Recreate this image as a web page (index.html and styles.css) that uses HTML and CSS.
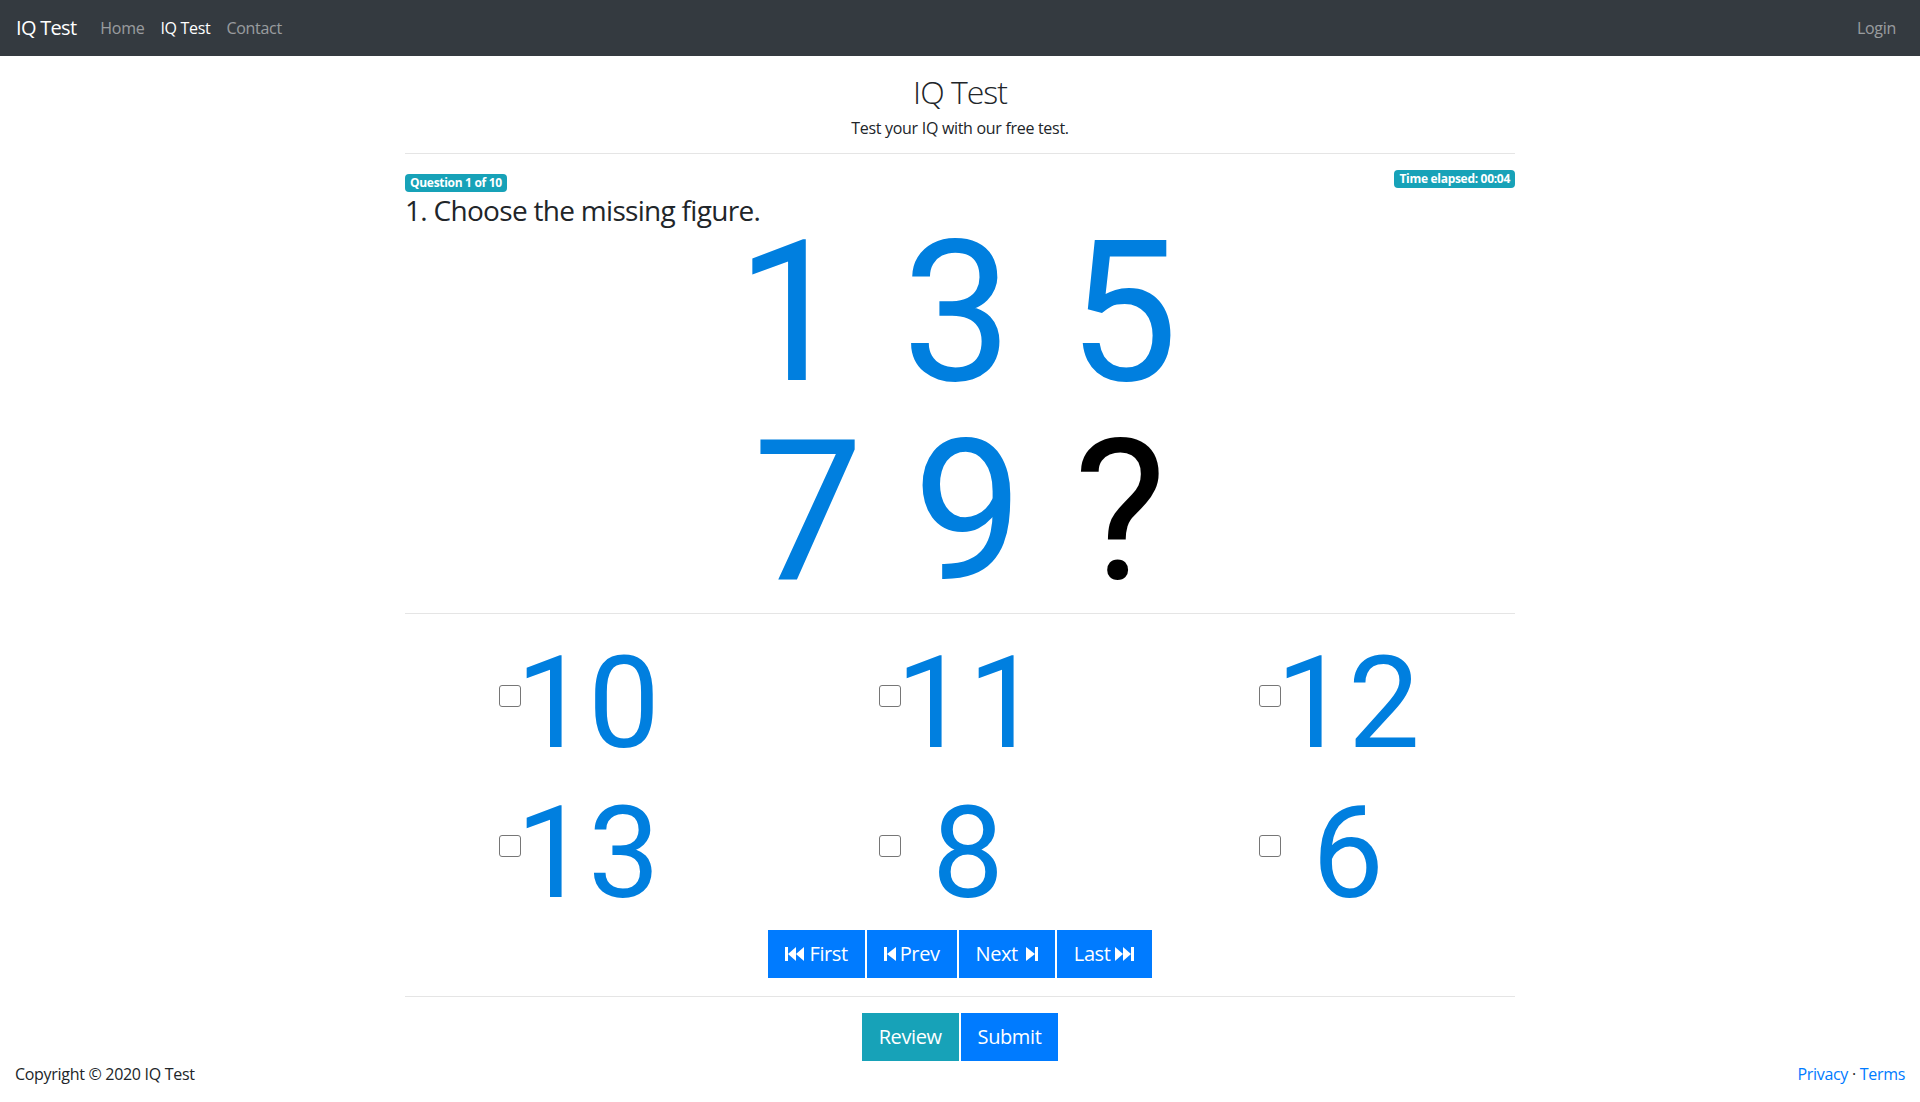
FILE: index.html
```html
<!DOCTYPE html>
<html lang="en">
<head>
<meta charset="utf-8">
<title>IQ Test</title>
<link rel="stylesheet" href="styles.css">
</head>
<body>
<nav class="navbar">
  <a class="brand" href="#">IQ Test</a>
  <ul class="nav-links">
    <li><a class="nav-link" href="#">Home</a></li>
    <li><a class="nav-link active" href="#">IQ Test</a></li>
    <li><a class="nav-link" href="#">Contact</a></li>
  </ul>
  <ul class="nav-links nav-right">
    <li><a class="nav-link" href="#">Login</a></li>
  </ul>
</nav>

<main class="container">
  <header class="intro">
    <h1 class="title">IQ Test</h1>
    <p class="subtitle">Test your IQ with our free test.</p>
  </header>
  <hr class="rule rule-top">

  <section class="question">
    <div class="q-meta">
      <span class="badge badge-q">Question 1 of 10</span>
      <span class="badge badge-time">Time elapsed: 00:04</span>
    </div>
    <h3 class="q-text">1. Choose the missing figure.</h3>
    <div class="figure">
      <div class="fig-row fig-row-1">
        <span class="fig fig-1">1</span><span class="fig">3</span><span class="fig">5</span>
      </div>
      <div class="fig-row fig-row-2">
        <span class="fig fig-7">7</span><span class="fig fig-9">9</span><span class="fig fig-unknown">?</span>
      </div>
    </div>
  </section>

  <hr class="rule rule-options">

  <div class="options">
    <label class="option"><input type="checkbox" class="check"><span class="opt-value">10</span></label>
    <label class="option"><input type="checkbox" class="check"><span class="opt-value">11</span></label>
    <label class="option"><input type="checkbox" class="check"><span class="opt-value">12</span></label>
    <label class="option"><input type="checkbox" class="check"><span class="opt-value">13</span></label>
    <label class="option"><input type="checkbox" class="check"><span class="opt-value">8</span></label>
    <label class="option"><input type="checkbox" class="check"><span class="opt-value">6</span></label>
  </div>

  <div class="pager">
    <button class="btn btn-primary btn-first"><svg class="ico ico-fast" viewBox="0 0 20 14" aria-hidden="true"><rect x="0" y="0" width="3" height="14"/><polygon points="3,7 11,0 11,14"/><polygon points="11,7 19,0 19,14"/></svg>First</button>
    <button class="btn btn-primary btn-prev"><svg class="ico ico-step" viewBox="0 0 12 14" aria-hidden="true"><rect x="0" y="0" width="3" height="14"/><polygon points="3,7 12,0 12,14"/></svg>Prev</button>
    <button class="btn btn-primary btn-next">Next<svg class="ico ico-step ico-after" viewBox="0 0 12 14" aria-hidden="true"><polygon points="0,0 9,7 0,14"/><rect x="9" y="0" width="3" height="14"/></svg></button>
    <button class="btn btn-primary btn-last">Last<svg class="ico ico-fast ico-after" viewBox="0 0 20 14" aria-hidden="true"><polygon points="0,0 8,7 0,14"/><polygon points="8,0 16,7 8,14"/><rect x="16" y="0" width="3" height="14"/></svg></button>
  </div>

  <hr class="rule rule-actions">

  <div class="actions">
    <button class="btn btn-info">Review</button>
    <button class="btn btn-primary">Submit</button>
  </div>
</main>

<footer class="footer">
  <span class="copyright">Copyright © 2020 IQ Test</span>
  <span class="footer-links"><a href="#">Privacy</a> · <a href="#">Terms</a></span>
</footer>
</body>
</html>
```

FILE: styles.css
```css
* { box-sizing: border-box; }

html, body { height: 100%; }

body {
  margin: 0;
  min-height: 100vh;
  display: flex;
  flex-direction: column;
  font-family: "Open Sans", "Noto Sans", sans-serif;
  font-size: 16px;
  line-height: 24px;
  letter-spacing: -0.3px;
  color: #212529;
  background: #fff;
}

a { text-decoration: none; }

/* navbar */
.navbar {
  height: 56px;
  flex: 0 0 56px;
  background: #343a40;
  display: flex;
  align-items: center;
  padding: 0 16px;
}
.brand {
  color: #fff;
  font-size: 20px;
  line-height: 30px;
  letter-spacing: -0.7px;
  margin-right: 16px;
}
.nav-links {
  display: flex;
  list-style: none;
  margin: 0;
  padding: 0;
}
.nav-right { margin-left: auto; }
.nav-link {
  display: block;
  padding: 8px;
  color: rgba(255, 255, 255, 0.5);
  font-size: 16px;
  line-height: 24px;
}
.nav-link.active { color: #fff; }

/* container */
.container {
  flex: 1 0 auto;
  width: 100%;
  max-width: 1140px;
  margin: 0 auto;
  padding: 17px 15px 0;
}

.intro { text-align: center; }
.title {
  margin: 0;
  font-size: 32px;
  line-height: 38px;
  font-weight: 300;
  letter-spacing: -1px;
}
.subtitle {
  margin: 5px 0 0;
  font-size: 16px;
  line-height: 24px;
}

.rule {
  border: 0;
  border-top: 1px solid rgba(0, 0, 0, 0.1);
  margin: 0;
}
.rule-top { margin-top: 13px; }
.rule-options { margin-top: 21px; margin-bottom: 12px; }
.rule-actions { margin-top: 18px; margin-bottom: 16px; }

/* question */
.q-meta {
  margin-top: 16px;
  display: flex;
  justify-content: space-between;
  align-items: flex-start;
}
.badge {
  display: inline-block;
  background: #17a2b8;
  color: #fff;
  font-size: 12px;
  font-weight: 700;
  line-height: 12px;
  padding: 3px 5px;
  border-radius: 4px;
  white-space: nowrap;
}
.badge-q { margin-top: 4px; }

.q-text {
  margin: 0;
  font-size: 28px;
  line-height: 36px;
  font-weight: 400;
  letter-spacing: -0.7px;
}

.figure {
  margin-top: 5px;
  font-family: Roboto, "Liberation Sans", Arial, sans-serif;
  font-size: 196px;
  line-height: 160px;
  letter-spacing: 0;
  color: #007fdf;
}
.fig-row {
  display: flex;
  justify-content: center;
}
.fig-row-1 { margin-left: -6px; }
.fig-row-2 { margin-top: 39px; }
.fig {
  width: 166px;
  text-align: center;
}
.fig-row-2 .fig { width: 160px; }
.fig-row-2 .fig-unknown { width: 144px; color: #000; }

/* options */
.options {
  display: grid;
  grid-template-columns: repeat(3, 380px);
  margin: 0 -15px;
}
.option {
  display: flex;
  align-items: center;
  height: 150px;
  padding: 4px 0 0 109px;
  font-family: Roboto, "Liberation Sans", Arial, sans-serif;
  font-size: 128px;
  line-height: 150px;
  letter-spacing: 0;
  color: #007fdf;
  cursor: pointer;
}
.check {
  appearance: none;
  -webkit-appearance: none;
  flex: 0 0 22px;
  width: 22px;
  height: 22px;
  margin: -15px 0 0;
  border: 1.5px solid #767676;
  border-radius: 3px;
  background: #fff;
}
.opt-value {
  flex: 0 0 134px;
  width: 134px;
  display: flex;
  justify-content: center;
}

/* buttons */
.pager, .actions {
  display: flex;
  justify-content: center;
  gap: 2px;
}
.pager { margin-top: 4px; }
.btn {
  font-family: "Open Sans", "Noto Sans", sans-serif;
  font-size: 20px;
  line-height: 30px;
  letter-spacing: -0.4px;
  padding: 8px 16px;
  border: 1px solid transparent;
  border-radius: 0;
  color: #fff;
  cursor: pointer;
  display: inline-flex;
  align-items: center;
}
.btn-primary { background: #007bff; border-color: #007bff; }
.btn-info { background: #17a2b8; border-color: #17a2b8; }

.ico { fill: #fff; height: 14px; }
.ico-fast { width: 20px; margin-right: 5px; }
.ico-step { width: 12px; margin-right: 4px; }
.ico-after.ico-fast { margin: 0 0 0 5px; }
.ico-after.ico-step { margin: 0 0 0 8px; }

/* footer */
.footer {
  flex: 0 0 40px;
  height: 40px;
  padding: 0 15px;
  display: flex;
  justify-content: space-between;
  align-items: flex-start;
  font-size: 16px;
  line-height: 24px;
  white-space: nowrap;
}
.footer-links a { color: #007bff; }
```
